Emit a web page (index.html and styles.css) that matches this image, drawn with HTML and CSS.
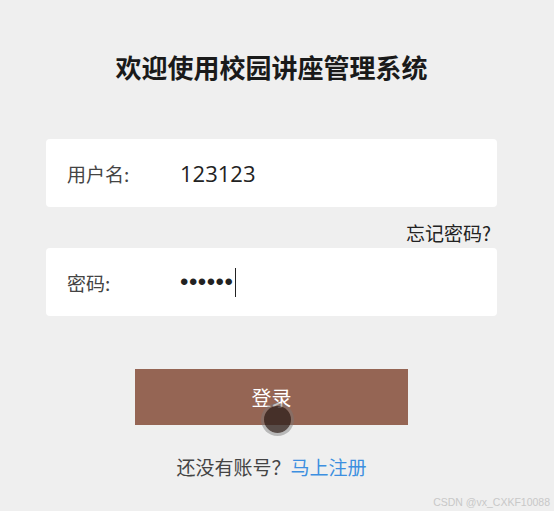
FILE: index.html
```html
<!DOCTYPE html>
<html>
<head>
    <title>校园讲座管理系统 - 登录</title>
    <link rel="stylesheet" href="styles.css">
</head>
<body>
    <div class="login">
        <h1>欢迎使用校园讲座管理系统</h1>

        <div class="field">
            <span class="label">用户名:</span>
            <span class="value">123123</span>
        </div>
        <div class="forgot">忘记密码?</div>
        <div class="field">
            <span class="label">密码:</span>
            <span class="value dots">••••••<span class="caret"></span></span>
        </div>

        <div class="btn-wrap">
            <div class="btn">登录<span class="pointer"></span></div>
        </div>

        <div class="register">还没有账号？<a href="#">马上注册</a></div>
    </div>
    <div class="mark">CSDN @vx_CXKF10088</div>
</body>
</html>
```

FILE: styles.css
```css
body {
    background: #efefef;
    color: #333;
    font-family: "Noto Sans CJK SC", "Noto Sans", sans-serif;
    margin: 0;
    height: 511px;
    overflow: hidden;
    position: relative;
}
.login {
    width: 451px;
    margin-left: 46px;
    padding-top: 48px;
}
h1 {
    text-align: center;
    font-size: 26px;
    font-weight: 700;
    color: #1a1a1a;
    margin: 0 0 53px 0;
    line-height: 38px;
}
.field {
    background: #fff;
    border-radius: 4px;
    height: 68px;
    display: flex;
    align-items: center;
    padding-left: 21px;
}
.label {
    width: 113px;
    font-size: 19px;
    color: #444;
}
.value {
    font-size: 22px;
    color: #222;
    font-family: "Open Sans", "Noto Sans", sans-serif;
    display: flex;
    align-items: center;
}
.dots {
    font-family: "Liberation Sans", sans-serif;
    font-size: 24px;
    letter-spacing: 0.5px;
}
.caret {
    display: inline-block;
    width: 1px;
    height: 29px;
    background: #222;
    margin-left: 2px;
}
.forgot {
    text-align: right;
    font-size: 19px;
    color: #222;
    height: 41px;
    line-height: 52px;
    padding-right: 6px;
}
.btn-wrap {
    display: flex;
    justify-content: center;
    margin-top: 53px;
}
.btn {
    width: 273px;
    height: 56px;
    background: #956554;
    color: #fff;
    font-size: 20px;
    text-align: center;
    line-height: 58px;
    position: relative;
}
.pointer {
    position: absolute;
    left: 129px;
    top: 37px;
    width: 27px;
    height: 27px;
    border-radius: 50%;
    background: rgba(50, 35, 30, 0.8);
    box-shadow: 0 0 0 3px rgba(120, 120, 120, 0.45);
}
.register {
    text-align: center;
    font-size: 19px;
    color: #444;
    margin-top: 28px;
}
.register a {
    color: #3d8fe0;
    text-decoration: none;
}
.mark {
    position: absolute;
    right: 4px;
    bottom: 3px;
    font-size: 10.5px;
    color: #c8c8c8;
    font-family: "Liberation Sans", sans-serif;
}
```
